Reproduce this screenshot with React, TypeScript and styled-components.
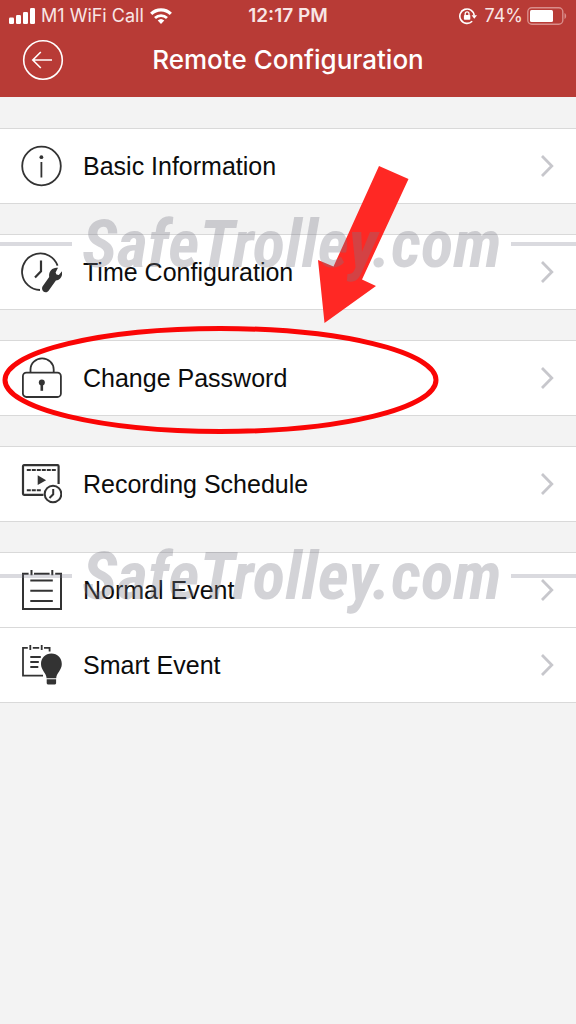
import React from "react";
import styled, { createGlobalStyle } from "styled-components";

const GlobalStyle = createGlobalStyle`
  * { box-sizing: border-box; }
  body {
    margin: 0;
    background: #f3f3f3;
    font-family: "Liberation Sans", Arial, sans-serif;
    color: #0c0c0c;
  }
`;

const Screen = styled.div`
  position: relative;
  min-height: 100vh;
  overflow-x: hidden;
`;

const Header = styled.header`
  background: #b83b36;
  color: #fff;
  padding-bottom: 9px;
`;

const StatusBar = styled.div`
  display: grid;
  grid-template-columns: 1fr auto 1fr;
  align-items: center;
  height: 32px;
  padding: 0 9px;
  font-family: Inter, sans-serif;
  font-size: 18px;
  line-height: 32px;
  color: #f8e6e5;
`;

const StatusSide = styled.div<{ $end?: boolean }>`
  display: flex;
  align-items: center;
  gap: ${(p) => (p.$end ? 4 : 6)}px;
  justify-content: ${(p) => (p.$end ? "flex-end" : "flex-start")};
  svg { display: block; flex: none; }
`;

const Percent = styled.span`
  margin-left: 4px;
`;

const Clock = styled.time`
  font-size: 19px;
  font-weight: 600;
`;

const NavBar = styled.nav`
  display: grid;
  grid-template-columns: 1fr auto 1fr;
  align-items: center;
  height: 56px;
  padding: 0 22px;
`;

const BackButton = styled.button`
  width: 42px;
  height: 42px;
  padding: 0;
  border: 0;
  background: none;
  color: inherit;
  cursor: pointer;
  svg { display: block; }
`;

const Title = styled.h1`
  margin: 0;
  font-family: Inter, sans-serif;
  font-size: 26px;
  line-height: 32px;
  font-weight: 500;
`;

const Groups = styled.main`
  display: flex;
  flex-direction: column;
  gap: 30px;
  padding: 31px 0;
`;

const Group = styled.ul`
  list-style: none;
  margin: 0;
  padding: 0;
  background: #fff;
  border-top: 1px solid #d9d9d9;
`;

const Item = styled.li`
  border-bottom: 1px solid #d9d9d9;
`;

const RowButton = styled.button`
  display: flex;
  align-items: center;
  gap: 21px;
  width: 100%;
  height: 74px;
  padding: 0 22px 0 20px;
  border: 0;
  background: none;
  color: inherit;
  font: inherit;
  font-size: 25px;
  line-height: 30px;
  text-align: left;
  cursor: pointer;
  svg { flex: none; }
`;

const Label = styled.span`
  flex: 1;
`;

const Watermark = styled.div<{ $top: number }>`
  position: absolute;
  top: ${(p) => p.$top}px;
  left: 0;
  right: 0;
  display: flex;
  align-items: center;
  gap: 10px;
  height: 80px;
  color: rgba(120, 120, 135, 0.33);
  font-family: "Roboto Condensed", "Liberation Sans Narrow", sans-serif;
  font-size: 67px;
  font-weight: 700;
  font-style: italic;
  line-height: 80px;
  white-space: nowrap;
  pointer-events: none;
`;

const Rule = styled.span<{ $grow?: boolean }>`
  flex: ${(p) => (p.$grow ? "1 0 0" : "0 0 72px")};
  height: 4px;
  background: rgba(120, 120, 135, 0.27);
`;

const Annotation = styled.svg`
  position: absolute;
  top: 0;
  left: 0;
  pointer-events: none;
`;

const Icon = ({ children }: { children: React.ReactNode }) => (
  <svg width="42" height="42" viewBox="0 0 42 42" fill="none" stroke="#333" strokeWidth="1.8" aria-hidden="true">
    {children}
  </svg>
);

const InfoIcon = () => (
  <Icon>
    <circle cx="21.5" cy="21" r="19.3" />
    <circle cx="21.4" cy="12.2" r="1.9" fill="#333" stroke="none" />
    <path d="M21.4 17v15.500" />
  </Icon>
);

const TimeIcon = () => (
  <Icon>
    <path d="M37.600 14.600A18.300 18.300 0 1 0 20 39" />
    <path d="M21 9.500v10.800l-6 6.200" strokeWidth="2.200" />
    <path
      d="M38 16.800l-2.400 4.600.9 2.200 2.300.3 3.200-3.600c.9 4.700-1.500 8.900-6.100 9.200L28.400 39.900c-2.800 3.200-7.900-.2-5.900-4.300L29.200 26c-.9-5.400 3.300-10.200 8.800-9.200Z"
      fill="#333"
      stroke="none"
    />
  </Icon>
);

const LockIcon = () => (
  <Icon>
    <rect x="2.900" y="15.700" width="38" height="24.300" rx="3.500" />
    <path d="M10.500 15.700v-3.200a11.600 11.200 0 0 1 23.200 0v3.200" />
    <circle cx="21.800" cy="25.500" r="3" fill="#333" stroke="none" />
    <path d="M21.800 26v7.800" strokeWidth="2.600" />
  </Icon>
);

const ScheduleIcon = () => (
  <Icon>
    <path d="M38.600 21V3.200a1 1 0 0 0-1-1H4a1 1 0 0 0-1 1v27.600a1 1 0 0 0 1 1h19.500" strokeWidth="2.200" />
    <path d="M6.800 6.900h29" strokeWidth="2" strokeDasharray="4 1" />
    <path d="M6.800 27.200h14" strokeWidth="2" strokeDasharray="4 1" />
    <path d="M17.700 12.300l8.400 4.900-8.400 4.900Z" fill="#333" stroke="none" />
    <circle cx="33" cy="31" r="8.300" strokeWidth="2" />
    <path d="M33.200 26v5.300l-3.700 3.700" strokeWidth="2" />
  </Icon>
);

const EventIcon = () => (
  <Icon>
    <path d="M8.600 4.800H3v35.100h38V4.800h-5.800M14 4.800h15.600" strokeWidth="2" />
    <path d="M11.500 1v5.300M32.300 1v5.300" strokeWidth="2" />
    <path d="M10.300 11.500h22.500M10.300 21.700h22.500M10.300 32h22.500" strokeWidth="2" />
  </Icon>
);

const SmartEventIcon = () => (
  <Icon>
    <path d="M7.800 3.900H3v27.800h20M12.800 3.900h6.400M24 3.900h5.600v3.600" />
    <path d="M10.300 1v5M21.700 1v5" />
    <path d="M10.300 13h10.500M10.300 18h8.500M10.300 23h8" />
    <path
      d="M31.400 9.500c-6 0-10.400 4.700-10.400 10.400 0 6.300 5.200 8.600 5.600 14.400h9.600c.4-5.800 5.600-8.100 5.600-14.400 0-5.700-4.400-10.400-10.400-10.400Z"
      fill="#333"
      stroke="none"
    />
    <path d="M26.700 35.300h9.400v3.700c0 1-1 1.600-2 1.600h-5.400c-1 0-2-.6-2-1.600Z" fill="#333" stroke="none" />
  </Icon>
);

const Chevron = () => (
  <svg width="14" height="24" viewBox="0 0 14 24" fill="none" stroke="#c7c7cc" strokeWidth="2.800" aria-hidden="true">
    <path d="M2 2l9.800 10L2 22" />
  </svg>
);

const SignalIcon = () => (
  <svg width="26" height="16" viewBox="0 0 26 16" fill="#fff" aria-label="Signal">
    <rect x="0" y="9.500" width="5" height="6.500" rx="1.200" />
    <rect x="7" y="7" width="5" height="9" rx="1.200" />
    <rect x="14" y="4" width="5" height="12" rx="1.200" />
    <rect x="21" y="0" width="5" height="16" rx="1.200" />
  </svg>
);

const WifiIcon = () => (
  <svg width="22" height="16" viewBox="0 0 22 16" fill="none" stroke="#fff" aria-label="WiFi">
    <path d="M1.200 5.900a14 14 0 0 1 19.600 0" strokeWidth="3.200" />
    <path d="M5 10a8.600 8.600 0 0 1 12 0" strokeWidth="2.800" />
    <path d="M7.700 12.600a4.800 4.800 0 0 1 6.600 0L11 16Z" fill="#fff" stroke="none" />
  </svg>
);

const RotationLockIcon = () => (
  <svg width="18" height="18" viewBox="0 0 18 18" fill="none" stroke="#fff" strokeWidth="1.600" aria-label="Rotation lock">
    <path d="M13.200 14.200A7.200 7.200 0 1 1 15.200 8.500" />
    <path d="M12.600 8.200h5.400l-2.700 3.600Z" fill="#fff" stroke="none" />
    <rect x="4.900" y="8" width="6.400" height="4.800" rx=".8" fill="#fff" stroke="none" />
    <path d="M6.200 8.300V6.800a1.900 1.900 0 0 1 3.800 0v1.500" strokeWidth="1.300" />
  </svg>
);

const BatteryIcon = () => (
  <svg width="40" height="18" viewBox="0 0 40 18" aria-label="Battery">
    <rect x=".8" y=".8" width="35" height="16.400" rx="4" fill="none" stroke="#d98d8a" strokeWidth="1.400" />
    <rect x="3" y="3" width="23" height="12" rx="1.500" fill="#fff" />
    <path d="M37.500 6c2.200.8 2.200 5.200 0 6Z" fill="#d98d8a" />
  </svg>
);

const groups = [
  [{ label: "Basic Information", Glyph: InfoIcon }],
  [{ label: "Time Configuration", Glyph: TimeIcon }],
  [{ label: "Change Password", Glyph: LockIcon }],
  [{ label: "Recording Schedule", Glyph: ScheduleIcon }],
  [
    { label: "Normal Event", Glyph: EventIcon },
    { label: "Smart Event", Glyph: SmartEventIcon },
  ],
];

export default function App() {
  return (
    <Screen>
      <GlobalStyle />
      <Header>
        <StatusBar>
          <StatusSide>
            <SignalIcon />
            <span>M1 WiFi Call</span>
            <WifiIcon />
          </StatusSide>
          <Clock>12:17 PM</Clock>
          <StatusSide $end>
            <RotationLockIcon />
            <Percent>74%</Percent>
            <BatteryIcon />
          </StatusSide>
        </StatusBar>
        <NavBar>
          <BackButton aria-label="Back">
            <svg width="42" height="42" viewBox="0 0 42 42" fill="none" stroke="#fff" strokeWidth="1.600">
              <circle cx="21" cy="21" r="19.300" />
              <path d="M30 21H10.800M18.800 13l-8 8 8 8" strokeWidth="1.600" />
            </svg>
          </BackButton>
          <Title>Remote Configuration</Title>
        </NavBar>
      </Header>
      <Groups>
        {groups.map((rows) => (
          <Group key={rows[0].label}>
            {rows.map(({ label, Glyph }) => (
              <Item key={label}>
                <RowButton>
                  <Glyph />
                  <Label>{label}</Label>
                  <Chevron />
                </RowButton>
              </Item>
            ))}
          </Group>
        ))}
      </Groups>
      <Annotation width="440" height="440" viewBox="0 0 440 440" aria-hidden="true">
        <path d="M379 166l29.500 13L362 279.500l14 6.500-51.500 37L318 260l15.500 6.500Z" fill="#ff2824" />
        <ellipse cx="220.500" cy="380" rx="215.500" ry="51.500" fill="none" stroke="#fa0505" strokeWidth="5" />
      </Annotation>
      {[204, 536].map((top) => (
        <Watermark key={top} $top={top}>
          <Rule />
          <span>SafeTrolley.com</span>
          <Rule $grow />
        </Watermark>
      ))}
    </Screen>
  );
}
